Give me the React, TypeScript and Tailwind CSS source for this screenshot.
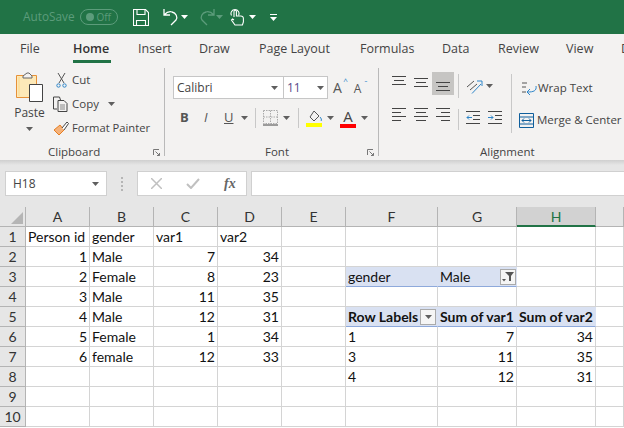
const ui = { fontFamily: '"Open Sans", "Noto Sans", sans-serif' }
const cellFont = { fontFamily: 'Lato, "Liberation Sans", sans-serif' }

function Caret({ className = "" }: { className?: string }) {
  return <svg width="7" height="4" viewBox="0 0 7 4" className={className}><path d="M0 0h7L3.5 4z" fill="#5f5f5f" /></svg>
}

function TitleBar() {
  return (
    <div className="h-[34px] bg-[#217346] flex items-center pl-[23px]">
      <span className="text-[11.8px] text-[#5c9c7b] w-[57px]">AutoSave</span>
      <div className="w-[38px] h-[16px] rounded-full border border-[#5c9c7b] flex items-center justify-between pl-[5px] pr-[6px]">
        <span className="w-[8px] h-[8px] rounded-full bg-[#5c9c7b]" />
        <span className="text-[10px] text-[#5c9c7b]">Off</span>
      </div>
      <svg width="16" height="17" viewBox="0 0 16 17" className="ml-[15px]" fill="none" stroke="#fff" strokeWidth="1.1">
        <path d="M.5.500h12l3 3v13H.5z" /><path d="M4 .5v5h8v-5M3.500 16.500v-5h9v5" />
      </svg>
      <svg width="17" height="18" viewBox="0 0 17 18" className="ml-[14px]" fill="none" stroke="#fff" strokeWidth="1.3">
        <path d="M1 1v6h6M1 7c3-3 5-4 8-3 4 1 6 5 4 8l-5 5" />
      </svg>
      <Caret className="ml-[1px] [&>path]:fill-white" />
      <svg width="17" height="18" viewBox="0 0 17 18" className="ml-[10px]" fill="none" stroke="#5c9c7b" strokeWidth="1.3">
        <path d="M16 1v6h-6M16 7c-3-3-5-4-8-3-4 1-6 5-4 8l5 5" />
      </svg>
      <Caret className="ml-[1px] [&>path]:fill-[#5c9c7b]" />
      <svg width="15" height="18" viewBox="0 0 15 18" className="ml-[7px]" fill="none" stroke="#fff" strokeWidth="1.1">
        <path d="M1.500 7.500a4 4 0 1 1 7 0" />
        <path d="M4 9V3.500a1.200 1.200 0 0 1 2.400 0V8h4.500a2.500 2.500 0 0 1 2.500 2.500V14l-1 3H5l-3.500-5 1-1L4 12" />
      </svg>
      <Caret className="ml-[4px] [&>path]:fill-white" />
      <svg width="7" height="7" viewBox="0 0 7 7" className="ml-[14px]"><path d="M0 0h7v1H0zM0 3h7L3.500 7z" fill="#fff" /></svg>
    </div>
  )
}

function Tabs() {
  const tabs = [
    ["File", "w-[73px] pl-[20px]"],
    ["Home", "w-[65px]"],
    ["Insert", "w-[61px]"],
    ["Draw", "w-[60px]"],
    ["Page Layout", "w-[101px]"],
    ["Formulas", "w-[82px]"],
    ["Data", "w-[56px]"],
    ["Review", "w-[68px]"],
    ["View", "w-[55px]"],
    ["D", "w-[3px]"],
  ]
  return (
    <div className="h-[30px] flex items-start pt-[6px] text-[12.5px] text-[#444]">
      {tabs.map(([t, w]) => (
        <div key={t} className={`${w} shrink-0 whitespace-nowrap`}>
          {t === "Home" ? (
            <span className="inline-block w-[38px] h-[23px] border-b-[3px] border-[#217346] font-semibold text-[#333]">{t}</span>
          ) : t}
        </div>
      ))}
    </div>
  )
}

function Launcher() {
  return (
    <svg width="7" height="7" viewBox="0 0 7 7" fill="none" stroke="#777">
      <path d="M.5 6V.5H6" /><path d="M2.500 2.500l4 4M6.500 4v2.500H4" />
    </svg>
  )
}

function Clipboard() {
  return (
    <div className="w-[165px] shrink-0 border-r border-[#b9b9b9] flex flex-col mt-[4px] mb-[4px] h-[88px]">
      <div className="flex flex-1">
        <div className="w-[52px] flex flex-col items-center pl-[7px] pt-[4px]">
          <svg width="27" height="30" viewBox="0 0 27 30" fill="none">
            <path d="M.5 3.500h20v22H.5z" fill="#fde9b8" stroke="#e69138" />
            <path d="M3 5v19" stroke="#fbd88a" />
            <path d="M7 4l4-3h2l3 3v2H7z" fill="#f3f2f1" stroke="#666" />
            <path d="M13.500 12.500h13v17h-13z" fill="#fff" stroke="#444" />
          </svg>
          <span className="text-[12px] leading-[18px] text-[#444] mt-[2px]">Paste</span>
          <Caret className="mt-[5px]" />
        </div>
        <div className="flex flex-col text-[11.500px] text-[#444] pl-[1px]">
          <div className="h-[24px] flex items-center pl-[3px]">
            <svg width="11" height="16" viewBox="0 0 11 16" fill="none" stroke="#555">
              <path d="M2 1l6 10M9 1L3 11" /><circle cx="2.500" cy="13.500" r="1.700" stroke="#2e86c9" /><circle cx="8.500" cy="13.500" r="1.700" stroke="#2e86c9" />
            </svg>
            <span className="ml-[5px]">Cut</span>
          </div>
          <div className="h-[24px] flex items-center">
            <svg width="16" height="16" viewBox="0 0 16 16" fill="none" stroke="#444">
              <path d="M4 13H.5V1h6l1 3" /><path d="M5 4.500h6l3 3v8H5z" /><path d="M7 9h5M7 11h5M7 13h5" stroke="#888" />
            </svg>
            <span className="ml-[3px]">Copy</span>
            <Caret className="ml-[9px]" />
          </div>
          <div className="h-[24px] flex items-center">
            <svg width="16" height="15" viewBox="0 0 16 15" fill="none">
              <path d="M1 9l6-5 4 5-5 5z" fill="#f5b27a" stroke="#e67e22" />
              <path d="M9 7l5-6 1.500 1.500L11 9" fill="#fff" stroke="#444" />
            </svg>
            <span className="ml-[3px] text-[11.200px] whitespace-nowrap">Format Painter</span>
          </div>
        </div>
      </div>
      <div className="h-[16px] flex items-center translate-y-[4px]">
        <span className="text-[11.500px] text-[#444] ml-[48px]">Clipboard</span>
        <span className="ml-auto mr-[4px]"><Launcher /></span>
      </div>
    </div>
  )
}

function FontGroup() {
  return (
    <div className="w-[214px] shrink-0 border-r border-[#b9b9b9] flex flex-col mt-[4px] mb-[4px] h-[88px] pl-[8px]">
      <div className="flex-1">
        <div className="flex items-center h-[23px] mt-[8px]">
          <div className="w-[111px] h-[23px] bg-white border border-[#c6c6c6] flex items-center justify-between pl-[3px] pr-[5px]">
            <span className="text-[12px] text-[#444]">Calibri</span><Caret />
          </div>
          <div className="w-[44px] h-[23px] bg-white border border-[#c6c6c6] border-l-0 flex items-center justify-between pl-[3px] pr-[3px]">
            <span className="text-[12px] text-[#5b4a8a]">11</span><Caret />
          </div>
          <div className="flex items-start ml-[5px] text-[#555] gap-[9px]">
            <span className="relative text-[14px] pr-[3px]">A<span className="text-[8px] text-[#2e86c9] absolute right-[-3px] top-[-2px]">^</span></span>
            <span className="relative text-[12px] mt-[3px] pr-[3px]">A<span className="text-[8px] text-[#2e86c9] absolute right-[-3px] top-[-3px]">ˇ</span></span>
          </div>
        </div>
        <div className="flex items-center h-[24px] mt-[7px] text-[#555]">
          <span className="w-[31px] pl-[7px] text-[13px] font-bold">B</span>
          <span className="w-[20px] text-[13px] italic">I</span>
          <span className="w-[17px] text-[13px] underline">U</span>
          <Caret />
          <span className="w-[1px] h-[20px] bg-[#c8c8c8] ml-[7px]" />
          <svg width="15" height="16" viewBox="0 0 15 16" className="ml-[7px]" fill="none" stroke="#aaa" strokeDasharray="1.500 1">
            <path d="M.5.500h14v13H.5zM7.500.500v13M.5 7h14" /><path d="M0 15h15" stroke="#444" strokeDasharray="none" />
          </svg>
          <Caret className="ml-[5px]" />
          <span className="w-[1px] h-[20px] bg-[#c8c8c8] ml-[8px]" />
          <svg width="17" height="17" viewBox="0 0 17 17" className="ml-[7px]" fill="none">
            <path d="M8 1l5 5-5 5-4-4z" stroke="#555" /><path d="M14 7c1 1 2 3 1 4" stroke="#2e86c9" /><path d="M0 13h16v4H0z" fill="#ffff00" />
          </svg>
          <Caret className="ml-[4px]" />
          <div className="ml-[6px] w-[16px] flex flex-col items-center">
            <span className="text-[15px] leading-[15px] text-[#444]">A</span>
            <span className="w-[16px] h-[4px] bg-[#ff0000]" />
          </div>
          <Caret className="ml-[5px]" />
        </div>
      </div>
      <div className="h-[16px] flex items-center translate-y-[4px]">
        <span className="text-[11.500px] text-[#444] ml-[92px]">Font</span>
        <span className="ml-auto mr-[4px]"><Launcher /></span>
      </div>
    </div>
  )
}

function AlignBtn({ d, on }: { d: string; on?: boolean }) {
  return (
    <div className={`w-[22px] h-[23px] flex items-center justify-center ${on ? "bg-[#c6c5c3]" : ""}`}>
      <svg width="15" height="15" viewBox="0 0 15 15" fill="none" stroke="#444"><path d={d} /></svg>
    </div>
  )
}

function AlignmentGroup() {
  return (
    <div className="flex-1 min-w-0 flex flex-col mt-[4px] mb-[4px] h-[88px] pl-[9px]">
      <div className="flex-1 flex">
        <div className="w-[66px] shrink-0 pt-[4px]">
          <div className="flex">
            <AlignBtn d="M0 .5h14M2 4.500h10M0 8.500h14" />
            <AlignBtn d="M0 2.500h14M2 6.500h10M0 10.500h14" />
            <AlignBtn on d="M0 6.500h14M2 10.500h10M0 14.500h14" />
          </div>
          <div className="flex mt-[7px]">
            <AlignBtn d="M0 2.500h14M0 6.500h9M0 10.500h14M0 14.500h9" />
            <AlignBtn d="M0 2.500h14M2 6.500h10M0 10.500h14M2 14.500h10" />
            <AlignBtn d="M0 2.500h14M5 6.500h9M0 10.500h14M5 14.500h9" />
          </div>
        </div>
        <div className="ml-[4px] w-[1px] shrink-0 flex flex-col pt-[6px]">
          <span className="h-[24px] bg-[#c8c8c8]" />
          <span className="h-[21px] mt-[11px] bg-[#c8c8c8]" />
        </div>
        <div className="w-[53px] shrink-0 border-r border-[#c8c8c8] mt-[6px] h-[59px] flex flex-col pl-[7px]">
          <div className="flex items-center h-[24px]">
            <svg width="17" height="15" viewBox="0 0 17 15" fill="none" stroke="#555">
              <path d="M1 8l7-6M4 11l7-6" /><path d="M6 14.500L15 5M11 2h5v5" stroke="#2e86c9" />
            </svg>
            <Caret className="ml-[3px]" />
          </div>
          <div className="flex items-center gap-[8px] h-[24px] mt-[7px]">
            <svg width="14" height="13" viewBox="0 0 14 13" fill="none" stroke="#444"><path d="M0 .5h14M7 4.500h7M7 8.500h7M0 12.500h14" /><path d="M6 6.500H1M3 4.500l-2 2 2 2" stroke="#2e86c9" /></svg>
            <svg width="14" height="13" viewBox="0 0 14 13" fill="none" stroke="#444"><path d="M0 .5h14M7 4.500h7M7 8.500h7M0 12.500h14" /><path d="M0 6.500h5M3 4.500l2 2-2 2" stroke="#2e86c9" /></svg>
          </div>
        </div>
        <div className="flex flex-col text-[11.500px] text-[#444] whitespace-nowrap">
          <div className="flex items-center h-[24px] mt-[8px] pl-[9px]">
            <svg width="16" height="16" viewBox="0 0 16 16" fill="none" stroke="#555">
              <path d="M1 3h5M1 7h4M1 12h4" /><path d="M15 6c1 5-3 6-8 6M9 9l-3 3 3 3" stroke="#2e86c9" />
            </svg>
            <span className="ml-[1px]">Wrap Text</span>
          </div>
          <div className="flex items-center h-[24px] mt-[8px] pl-[7px]">
            <svg width="15" height="15" viewBox="0 0 15 15" fill="none" stroke="#0f5f9c">
              <path d="M.5.500h14v14H.5zM.5 4h14M.5 11h14" /><path d="M3 7.500h9M5 5.500l-2 2 2 2M10 5.500l2 2-2 2" />
            </svg>
            <span className="ml-[3px]">Merge &amp; Center</span>
          </div>
        </div>
      </div>
      <div className="h-[16px] flex items-center translate-y-[4px]">
        <span className="text-[11.500px] text-[#444] ml-[92px]">Alignment</span>
      </div>
    </div>
  )
}

function FormulaBar() {
  return (
    <div className="h-[47px] bg-[#e6e6e6] flex items-start pt-[11px] pl-[5px]">
      <div className="w-[102px] h-[25px] bg-white border border-[#d0d0d0] flex items-center justify-between pl-[7px] pr-[7px]">
        <span className="text-[12px] text-[#444]">H18</span><Caret />
      </div>
      <div className="w-[30px] h-[25px] flex flex-col items-center justify-center gap-[2px]">
        {[0, 1, 2, 3].map(i => <span key={i} className="w-[2px] h-[2px] bg-[#b5b5b5]" />)}
      </div>
      <div className="w-[110px] h-[25px] bg-white border border-[#d0d0d0] flex items-center pl-[13px]">
        <svg width="11" height="11" viewBox="0 0 11 11" stroke="#c0c0c0" strokeWidth="1.500"><path d="M0 0l11 11M11 0L0 11" /></svg>
        <svg width="14" height="11" viewBox="0 0 14 11" stroke="#c0c0c0" strokeWidth="2" fill="none" className="ml-[24px]"><path d="M1 6l4 4 8-9" /></svg>
        <span className="ml-[24px] text-[14px] italic font-semibold text-[#666]" style={{ fontFamily: '"Liberation Serif", serif' }}>fx</span>
      </div>
      <div className="flex-1 h-[25px] bg-white border border-[#d0d0d0] border-r-0 ml-[4px]" />
    </div>
  )
}

type Cell = { t?: string; r?: boolean; kind?: "filter" | "head" | "filterBtn" | "headBtn" }

const rows: Cell[][] = [
  [{ t: "Person id" }, { t: "gender" }, { t: "var1" }, { t: "var2" }],
  [{ t: "1", r: true }, { t: "Male" }, { t: "7", r: true }, { t: "34", r: true }],
  [{ t: "2", r: true }, { t: "Female" }, { t: "8", r: true }, { t: "23", r: true }, {}, { t: "gender", kind: "filter" }, { t: "Male", kind: "filterBtn" }],
  [{ t: "3", r: true }, { t: "Male" }, { t: "11", r: true }, { t: "35", r: true }],
  [{ t: "4", r: true }, { t: "Male" }, { t: "12", r: true }, { t: "31", r: true }, {}, { t: "Row Labels", kind: "headBtn" }, { t: "Sum of var1", kind: "head" }, { t: "Sum of var2", kind: "head" }],
  [{ t: "5", r: true }, { t: "Female" }, { t: "1", r: true }, { t: "34", r: true }, {}, { t: "1" }, { t: "7", r: true }, { t: "34", r: true }],
  [{ t: "6", r: true }, { t: "female" }, { t: "12", r: true }, { t: "33", r: true }, {}, { t: "3" }, { t: "11", r: true }, { t: "35", r: true }],
  [{}, {}, {}, {}, {}, { t: "4" }, { t: "12", r: true }, { t: "31", r: true }],
  [],
  [],
]

function SheetCell({ cell }: { cell: Cell }) {
  const k = cell.kind
  const tint = k === "filter" || k === "filterBtn"
    ? "bg-[#d9e1f2] border-b-[#8ea9db] border-r-[#d9e1f2]"
    : k === "head" || k === "headBtn"
      ? "bg-[#d9e1f2] border-b-[#8ea9db] border-r-[#d9e1f2] font-bold"
      : "border-b-[#d4d4d4] border-r-[#d4d4d4]"
  return (
    <div className={`h-[20px] border-b border-r pl-[2px] pr-[2px] flex items-center whitespace-nowrap overflow-hidden text-[14px] leading-[19px] text-[#111] ${tint} ${cell.r ? "justify-end" : "justify-between"}`}>
      <span>{cell.t}</span>
      {k === "filterBtn" && (
        <span className="w-[16px] h-[16px] -mr-[2px] bg-[#f5f5f5] border border-[#aaa] flex items-center justify-center">
          <svg width="12" height="10" viewBox="0 0 12 10"><path d="M3 0h9L9 4v5H7V4z" fill="#555" /><path d="M0 7h4L2 9.500z" fill="#555" /></svg>
        </span>
      )}
      {k === "headBtn" && (
        <span className="w-[16px] h-[16px] -mr-[1px] bg-[#f5f5f5] border border-[#aaa] flex items-center justify-center"><Caret /></span>
      )}
    </div>
  )
}

function Sheet() {
  const cols = ["A", "B", "C", "D", "E", "F", "G", "H", ""]
  return (
    <div className="grid grid-cols-[26px_64px_64px_64px_64px_64px_92px_79px_79px_28px] auto-rows-[20px] bg-white" style={cellFont}>
      <div className="bg-[#e6e6e6] border-r border-b border-[#b4b4b4] flex items-end justify-end p-[2px]">
        <svg width="12" height="12" viewBox="0 0 12 12"><path d="M12 0v12H0z" fill="#b5b5b5" /></svg>
      </div>
      {cols.map((c, i) => (
        <div
          key={i}
          className={`text-[14px] flex items-center justify-center border-r ${
            c === "H"
              ? "bg-[#d2d2d2] border-b-2 border-b-[#217346] border-r-[#b4b4b4] text-[#217346]"
              : "bg-[#e6e6e6] border-b border-[#b4b4b4] text-[#333]"
          }`}
        >
          {c}
        </div>
      ))}
      {rows.map((row, ri) => (
        <div key={ri} className="contents">
          <div className="bg-[#e6e6e6] border-r border-b border-[#b4b4b4] text-[14px] text-[#333] flex items-center justify-center">{ri + 1}</div>
          {Array.from({ length: 9 }).map((_, ci) => <SheetCell key={ci} cell={row[ci] ?? {}} />)}
        </div>
      ))}
    </div>
  )
}

export default function App() {
  return (
    <div className="w-[624px] h-[428px] overflow-hidden bg-white" style={ui}>
      <TitleBar />
      <div className="bg-[#f3f2f1]">
        <Tabs />
        <div className="h-[96px] flex">
          <Clipboard />
          <FontGroup />
          <AlignmentGroup />
        </div>
      </div>
      <div className="h-[5px] bg-gradient-to-b from-[#cfcfcf] to-[#e6e6e6] -mb-[5px] relative" />
      <FormulaBar />
      <Sheet />
    </div>
  )
}
